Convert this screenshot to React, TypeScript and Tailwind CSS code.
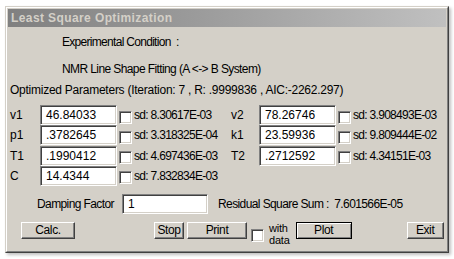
import React from "react";

const Box = ({ value, w = "w-[77px]" }: { value: string; w?: string }) => (
	<div
		className={`${w} h-[20px] bg-white border border-t-[#808080] border-l-[#808080] border-r-white border-b-white shadow-[inset_1px_1px_0_#404040,inset_-1px_-1px_0_#d4d0c8] pl-[5px] text-[12px] leading-[18px]`}
	>
		{value}
	</div>
);

const Check = () => (
	<div className="w-[13px] h-[13px] bg-white border border-t-[#808080] border-l-[#808080] border-r-white border-b-white shadow-[inset_1px_1px_0_#404040,inset_-1px_-1px_0_#d4d0c8]" />
);

const Btn = ({
	label,
	w,
	isDefault = false,
}: {
	label: string;
	w: string;
	isDefault?: boolean;
}) => (
	<div
		className={`${w} h-[17px] flex items-center justify-center text-[12px] leading-none tracking-[-0.4px] ${
			isDefault
				? "border border-black shadow-[inset_1px_1px_0_#fff,inset_-1px_-1px_0_#808080]"
				: "border border-t-white border-l-white border-r-[#404040] border-b-[#404040] shadow-[inset_-1px_-1px_0_#808080]"
		}`}
	>
		{label}
	</div>
);

const Param = ({ p, lw }: { p: [string, string, string]; lw: string }) => (
	<div className="flex items-center">
		<span className={`${lw} text-[12px]`}>{p[0]}</span>
		<Box value={p[1]} />
		<div className="ml-[2px] mt-[4px]">
			<Check />
		</div>
		<span className="ml-[2px] text-[12px] tracking-[-0.7px]">sd: {p[2]}</span>
	</div>
);

const Row = ({
	left,
	right,
}: {
	left: [string, string, string];
	right?: [string, string, string];
}) => (
	<div className="flex h-[20px] items-center">
		<div className="w-[221px]">
			<Param p={left} lw="w-[30px]" />
		</div>
		{right && <Param p={right} lw="w-[28px]" />}
	</div>
);

export default function App() {
	return (
		<div className="w-[454px] h-[259px] bg-white overflow-hidden pt-[6px] pl-[5px] font-['Liberation_Sans',Arial,sans-serif] text-black">
			<div className="w-[444px] h-[247px] border border-t-[#d4d0c8] border-l-[#d4d0c8] border-r-[#404040] border-b-[#404040] shadow-[2px_2px_3px_rgba(0,0,0,0.25)]">
				<div className="h-full bg-[#d4d0c8] border border-t-white border-l-white border-r-[#808080] border-b-[#808080] flex flex-col">
					{/* title bar */}
					<div className="mx-[1px] mt-[1px] h-[18px] bg-gradient-to-r from-[#808080] to-[#c0c0c0] flex items-center pl-[3px]">
						<span className="text-[#d4d0c8] text-[12px] font-bold tracking-[0.4px]">
							Least Square Optimization
						</span>
					</div>

					<div className="mt-[5px] h-[20px] leading-[20px] pl-[55px] text-[12px] tracking-[-0.7px]">
						Experimental Condition&nbsp; :
					</div>
					<div className="mt-[7px] h-[20px] leading-[20px] pl-[55px] text-[12px] tracking-[-0.6px]">
						NMR Line Shape Fitting (A &lt;-&gt; B System)
					</div>
					<div className="mt-[1px] h-[20px] leading-[20px] pl-[3px] text-[12px] tracking-[-0.25px]">
						Optimized Parameters (Iteration: 7 , R: .9999836 , AIC:-2262.297)
					</div>

					<div className="mt-[5px] pl-[3px] flex flex-col gap-[0.3px]">
						<Row left={["v1", "46.84033", "8.30617E-03"]} right={["v2", "78.26746", "3.908493E-03"]} />
						<Row left={["p1", ".3782645", "3.318325E-04"]} right={["k1", "23.59936", "9.809444E-02"]} />
						<Row left={["T1", ".1990412", "4.697436E-03"]} right={["T2", ".2712592", "4.34151E-03"]} />
						<Row left={["C", "14.4344", "7.832834E-03"]} />
					</div>

					<div className="mt-[8px] h-[20px] flex items-center pl-[30px]">
						<span className="w-[85px] text-[12px] tracking-[-0.6px]">Damping Factor</span>
						<Box value="1" w="w-[86px]" />
						<span className="ml-[10px] text-[12px] tracking-[-0.6px]">
							Residual Square Sum :&nbsp; 7.601566E-05
						</span>
					</div>

					<div className="mt-[8px] flex items-start pl-[14px]">
						<Btn label="Calc." w="w-[54px]" />
						<div className="ml-[79px]">
							<Btn label="Stop" w="w-[30px]" />
						</div>
						<div className="ml-[3px]">
							<Btn label="Print" w="w-[60px]" />
						</div>
						<div className="ml-[4px] mt-[7px]">
							<Check />
						</div>
						<div className="ml-[5px] mt-[1px] text-[11px] tracking-[-0.2px] flex flex-col gap-[1px]">
							<span className="h-[11px] leading-[11px]">with</span>
							<span className="h-[11px] leading-[11px]">data</span>
						</div>
						<div className="ml-[6px]">
							<Btn label="Plot" w="w-[56px]" isDefault />
						</div>
						<div className="ml-[55px]">
							<Btn label="Exit" w="w-[37px]" />
						</div>
					</div>
				</div>
			</div>
		</div>
	);
}
